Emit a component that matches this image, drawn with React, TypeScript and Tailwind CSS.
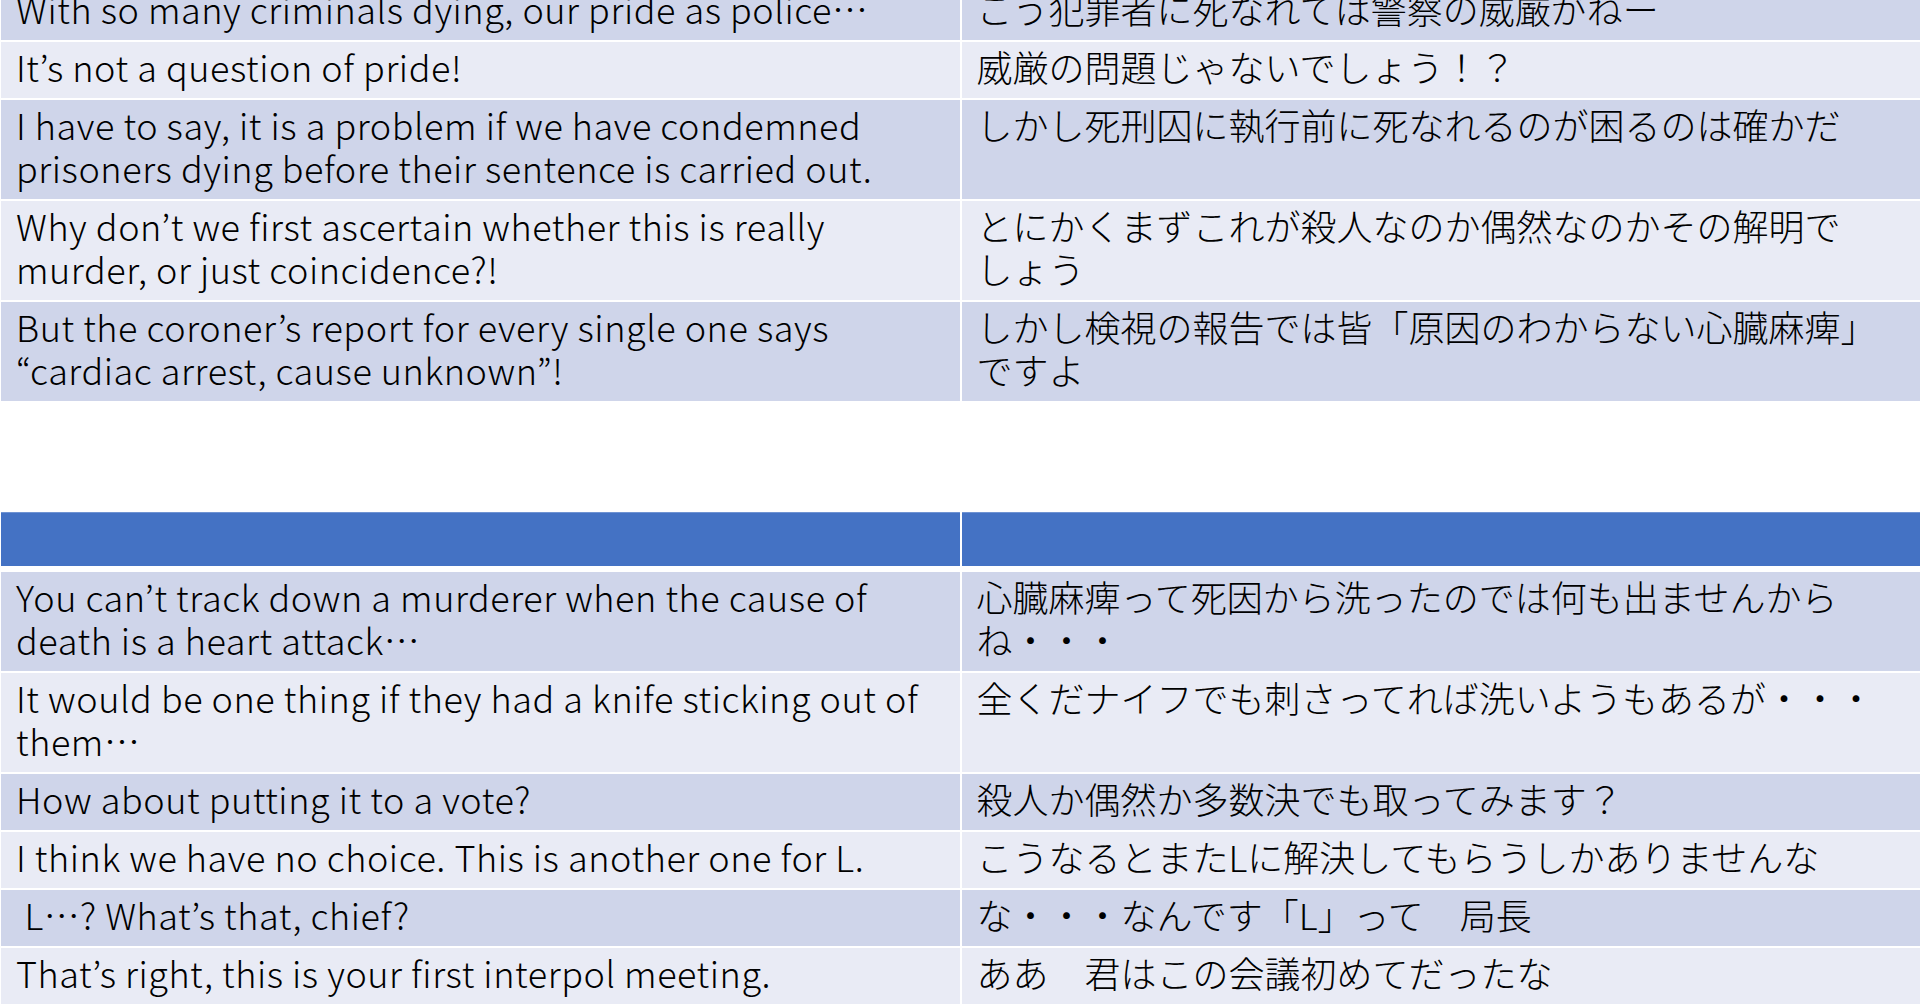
type Row = { en: string[]; ja: string[]; tall?: boolean }

const firstTable: Row[] = [
  { en: ["With so many criminals dying, our pride as police…"], ja: ["こう犯罪者に死なれては警察の威厳がねー"] },
  { en: ["It’s not a question of pride!"], ja: ["威厳の問題じゃないでしょう！？"] },
  {
    en: ["I have to say, it is a problem if we have condemned", "prisoners dying before their sentence is carried out."],
    ja: ["しかし死刑囚に執行前に死なれるのが困るのは確かだ"],
    tall: true,
  },
  {
    en: ["Why don’t we first ascertain whether this is really", "murder, or just coincidence?!"],
    ja: ["とにかくまずこれが殺人なのか偶然なのかその解明で", "しょう"],
    tall: true,
  },
  {
    en: ["But the coroner’s report for every single one says", "“cardiac arrest, cause unknown”!"],
    ja: ["しかし検視の報告では皆「原因のわからない心臓麻痺」", "ですよ"],
    tall: true,
  },
]

const secondTable: Row[] = [
  {
    en: ["You can’t track down a murderer when the cause of", "death is a heart attack…"],
    ja: ["心臓麻痺って死因から洗ったのでは何も出ませんから", "ね・・・"],
    tall: true,
  },
  {
    en: ["It would be one thing if they had a knife sticking out of", "them…"],
    ja: ["全くだナイフでも刺さってれば洗いようもあるが・・・"],
    tall: true,
  },
  { en: ["How about putting it to a vote?"], ja: ["殺人か偶然か多数決でも取ってみます？"] },
  { en: ["I think we have no choice. This is another one for L."], ja: ["こうなるとまたLに解決してもらうしかありませんな"] },
  { en: ["\u00a0L…? What’s that, chief?"], ja: ["な・・・なんです「L」って\u3000局長"] },
  { en: ["That’s right, this is your first interpol meeting."], ja: ["ああ\u3000君はこの会議初めてだったな"] },
]

const fontStack = { fontFamily: '"Noto Sans CJK JP", "Noto Sans", sans-serif' }

// the slides set the ellipsis in the Japanese font, so it sits mid-line
function EnLine({ text }: { text: string }) {
  const parts = text.split("…")
  return (
    <div>
      {parts.map((p, i) => (
        <span key={i}>
          {p}
          {i < parts.length - 1 && <span lang="ja" className="tracking-normal">…</span>}
        </span>
      ))}
    </div>
  )
}

function Cell({ lines, tall, odd, en }: { lines: string[]; tall?: boolean; odd: boolean; en?: boolean }) {
  return (
    <div
      lang={en ? "en" : "ja"}
      className={`${tall ? "h-[99px]" : "h-[56px]"} ${odd ? "bg-[#cfd5ea]" : "bg-[#e9ebf5]"} ${en ? "tracking-[0.55px]" : ""} px-[15px] pt-[3px] text-[36px] font-light leading-[43px] text-black whitespace-nowrap overflow-hidden`}
    >
      {lines.map((l, i) => (en ? <EnLine key={i} text={l} /> : <div key={i}>{l}</div>))}
    </div>
  )
}

function TableRows({ rows }: { rows: Row[] }) {
  return (
    <>
      {rows.map((r, i) => (
        <div key={i} className="grid grid-cols-2 gap-x-[2px]">
          <Cell lines={r.en} tall={r.tall} odd={i % 2 === 0} en />
          <Cell lines={r.ja} tall={r.tall} odd={i % 2 === 0} />
        </div>
      ))}
    </>
  )
}

export default function App() {
  return (
    <div className="w-[1920px] h-[1005px] overflow-hidden bg-white" style={fontStack}>
      <div className="-mt-[16px] pl-px flex flex-col gap-y-[2px]">
        <TableRows rows={firstTable} />
      </div>
      <div className="mt-[111px] pl-px flex flex-col gap-y-[2px]">
        <div className="grid grid-cols-2 gap-x-[2px] mb-[4px]">
          <div className="h-[54px] bg-[#4472c4] border-t border-[#6f93d3]" />
          <div className="h-[54px] bg-[#4472c4] border-t border-[#6f93d3]" />
        </div>
        <TableRows rows={secondTable} />
      </div>
    </div>
  )
}
